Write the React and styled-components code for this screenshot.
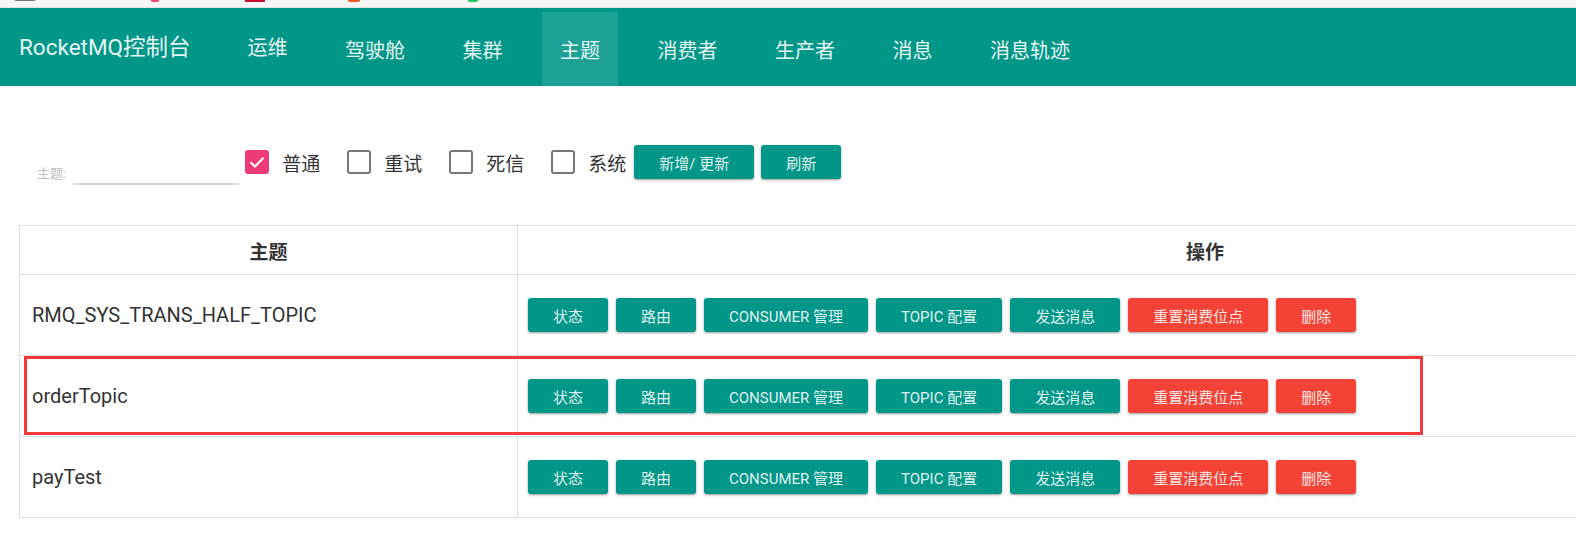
import React from "react"
import styled, { createGlobalStyle } from "styled-components"

const GlobalStyle = createGlobalStyle`
  html, body {
    margin: 0;
    padding: 0;
    overflow: hidden;
    background: #ffffff;
    font-family: Roboto, "Noto Sans CJK SC", "Noto Sans", sans-serif;
  }
`

const TopStrip = styled.div`
  height: 7px;
  background: #f7f7f7;
  border-bottom: 1px solid #e2e2e2;
  display: flex;
  align-items: flex-start;
  overflow: hidden;
`

const StripMark = styled.span`
  display: block;
  margin-left: ${(p) => p.gap}px;
  width: ${(p) => p.w}px;
  height: ${(p) => p.h}px;
  background: ${(p) => p.color};
  border-radius: ${(p) => (p.round ? "0 0 50% 50%" : "0")};
`

const NavBar = styled.div`
  height: 78px;
  background: #009688;
  display: flex;
  align-items: stretch;
  padding-left: 19px;
`

const Brand = styled.div`
  display: flex;
  align-items: center;
  font-size: 22.5px;
  color: #e6f5f3;
  padding-bottom: 4px;
  margin-right: 39px;
`

const NavList = styled.div`
  display: flex;
  gap: 21.5px;
`

const NavItem = styled.div`
  display: flex;
  align-items: center;
  padding: 0 18px ${(p) => (p.raised ? "6px" : "0")};
  margin-top: 4px;
  font-size: 20px;
  color: #e6f5f3;
  background: ${(p) => (p.active ? "#1ca194" : "transparent")};
`

const Content = styled.div`
  padding: 0 19px;
`

const FilterRow = styled.div`
  margin-top: 59px;
  height: 34px;
  padding-left: 18px;
  display: flex;
  align-items: center;
`

const TopicField = styled.div`
  align-self: flex-end;
  margin-bottom: -6px;
  display: flex;
  align-items: flex-end;
  margin-right: 6px;
`

const FieldLabel = styled.span`
  font-size: 13px;
  color: #bdbdbd;
  padding-bottom: 3px;
`

const FieldInput = styled.div`
  width: 166px;
  height: 22px;
  margin-left: 7px;
  border-bottom: 2px solid #d4d4d4;
`

const CheckGroup = styled.label`
  display: flex;
  align-items: center;
  margin-right: ${(p) => (p.last ? "8px" : "27px")};
`

const Box = styled.span`
  width: 24px;
  height: 24px;
  box-sizing: border-box;
  border-radius: 3px;
  border: ${(p) => (p.checked ? "none" : "2px solid #777777")};
  background: ${(p) => (p.checked ? "#ee3b78" : "transparent")};
  display: flex;
  align-items: center;
  justify-content: center;
`

const CheckText = styled.span`
  margin-left: 13px;
  font-size: 19px;
  color: #333333;
`

const Button = styled.button`
  height: 34px;
  padding: 0 25px;
  border: none;
  border-radius: 3px;
  background: ${(p) => (p.danger ? "#f44336" : "#009688")};
  color: rgba(255, 255, 255, 0.9);
  font-family: Roboto, "Noto Sans CJK SC", sans-serif;
  font-size: 15px;
  box-shadow: 0 1px 3px rgba(0, 0, 0, 0.3), 0 1px 1px rgba(0, 0, 0, 0.12);
  margin-right: ${(p) => (p.space ? 7 : 0)}px;
  cursor: pointer;
  white-space: nowrap;
`

const Table = styled.div`
  margin-top: 46px;
  width: 1873px;
  border-top: 1px solid #dddddd;
  border-left: 1px solid #dddddd;
`

const Row = styled.div`
  position: relative;
  display: grid;
  grid-template-columns: 498px 1fr;
  height: ${(p) => (p.head ? 49 : 81)}px;
`

const Cell = styled.div`
  border-right: 1px solid #dddddd;
  border-bottom: 1px solid #dddddd;
  display: flex;
  align-items: center;
  justify-content: ${(p) => (p.head ? "center" : "flex-start")};
  padding: 0 12px 0 ${(p) => (p.tight ? 10 : 12)}px;
  font-size: ${(p) => (p.head ? 19 : 20)}px;
  font-weight: ${(p) => (p.head ? 700 : 400)};
  color: #333333;
`

const Actions = styled.div`
  display: flex;
  gap: 8px;
`

const Highlight = styled.div`
  position: absolute;
  left: 4px;
  top: 0;
  width: 1399px;
  height: 79px;
  box-sizing: border-box;
  border: 3px solid #f23a3a;
  pointer-events: none;
`

const CheckMark = () => (
  <svg width="16" height="12" viewBox="0 0 16 12">
    <path d="M1.5 6.2 L6 10.5 L14.5 1.8" fill="none" stroke="#ffffff" strokeWidth="2" />
  </svg>
)

const kinds = [
  { label: "普通", checked: true },
  { label: "重试" },
  { label: "死信" },
  { label: "系统", last: true },
]

const actions = [
  { label: "状态" },
  { label: "路由" },
  { label: "CONSUMER 管理" },
  { label: "TOPIC 配置" },
  { label: "发送消息" },
  { label: "重置消费位点", danger: true },
  { label: "删除", danger: true },
]

const topics = [
  { name: "RMQ_SYS_TRANS_HALF_TOPIC" },
  { name: "orderTopic", marked: true },
  { name: "payTest" },
]

const navs = ["运维", "驾驶舱", "集群", "主题", "消费者", "生产者", "消息", "消息轨迹"]

const App = () => (
  <>
    <GlobalStyle />
    <TopStrip>
      <StripMark gap={15} w={20} h={1} color="#777777" />
      <StripMark gap={116} w={8} h={2} color="#e8436b" round />
      <StripMark gap={86} w={20} h={2} color="#c8102e" />
      <StripMark gap={83} w={12} h={2} color="#f4511e" round />
      <StripMark gap={108} w={10} h={2} color="#22c55e" round />
    </TopStrip>
    <NavBar>
      <Brand>RocketMQ控制台</Brand>
      <NavList>
        {navs.map((n, i) => (
          <NavItem key={n} active={n === "主题"} raised={i === 0}>
            {n}
          </NavItem>
        ))}
      </NavList>
    </NavBar>
    <Content>
      <FilterRow>
        <TopicField>
          <FieldLabel>主题:</FieldLabel>
          <FieldInput />
        </TopicField>
        {kinds.map((k) => (
          <CheckGroup key={k.label} last={k.last}>
            <Box checked={k.checked}>{k.checked && <CheckMark />}</Box>
            <CheckText>{k.label}</CheckText>
          </CheckGroup>
        ))}
        <Button space>新增/ 更新</Button>
        <Button>刷新</Button>
      </FilterRow>
      <Table>
        <Row head>
          <Cell head>主题</Cell>
          <Cell head>操作</Cell>
        </Row>
        {topics.map((t) => (
          <Row key={t.name}>
            <Cell>{t.name}</Cell>
            <Cell tight>
              <Actions>
                {actions.map((a) => (
                  <Button key={a.label} danger={a.danger}>
                    {a.label}
                  </Button>
                ))}
              </Actions>
            </Cell>
            {t.marked && <Highlight />}
          </Row>
        ))}
      </Table>
    </Content>
  </>
)

export default App
